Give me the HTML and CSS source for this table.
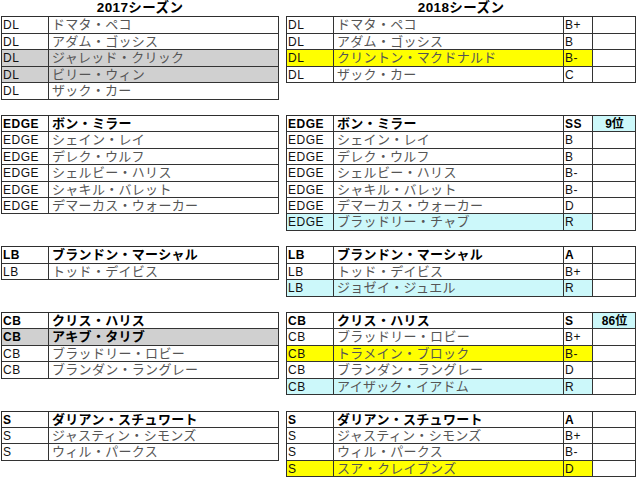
FILE: index.html
```html
<!DOCTYPE html>
<html lang="ja">
<head>
<meta charset="utf-8">
<link rel="stylesheet" href="styles.css">
</head>
<body>
<div class="page">
  <div class="head">
    <div class="t l">2017シーズン</div>
    <div class="t r">2018シーズン</div>
  </div>
  <div class="sheet">
    <div class="sec">
      <div class="tbl l">
        <div class="row"><div class="c">DL</div><div class="c n">ドマタ・ペコ</div></div>
        <div class="row"><div class="c">DL</div><div class="c n">アダム・ゴッシス</div></div>
        <div class="row gray"><div class="c">DL</div><div class="c n">ジャレッド・クリック</div></div>
        <div class="row gray"><div class="c">DL</div><div class="c n">ビリー・ウィン</div></div>
        <div class="row"><div class="c">DL</div><div class="c n">ザック・カー</div></div>
      </div>
      <div class="tbl r">
        <div class="row"><div class="c">DL</div><div class="c n">ドマタ・ペコ</div><div class="c">B+</div><div class="c rk"></div></div>
        <div class="row"><div class="c">DL</div><div class="c n">アダム・ゴッシス</div><div class="c">B</div><div class="c rk"></div></div>
        <div class="row yel"><div class="c">DL</div><div class="c n">クリントン・マクドナルド</div><div class="c">B-</div><div class="c rk"></div></div>
        <div class="row"><div class="c">DL</div><div class="c n">ザック・カー</div><div class="c">C</div><div class="c rk"></div></div>
      </div>
    </div>

    <div class="sec">
      <div class="tbl l">
        <div class="row b"><div class="c">EDGE</div><div class="c n">ボン・ミラー</div></div>
        <div class="row"><div class="c">EDGE</div><div class="c n">シェイン・レイ</div></div>
        <div class="row"><div class="c">EDGE</div><div class="c n">デレク・ウルフ</div></div>
        <div class="row"><div class="c">EDGE</div><div class="c n">シェルビー・ハリス</div></div>
        <div class="row"><div class="c">EDGE</div><div class="c n">シャキル・バレット</div></div>
        <div class="row"><div class="c">EDGE</div><div class="c n">デマーカス・ウォーカー</div></div>
      </div>
      <div class="tbl r">
        <div class="row b"><div class="c">EDGE</div><div class="c n">ボン・ミラー</div><div class="c">SS</div><div class="c rk hl">9位</div></div>
        <div class="row"><div class="c">EDGE</div><div class="c n">シェイン・レイ</div><div class="c">B</div><div class="c rk"></div></div>
        <div class="row"><div class="c">EDGE</div><div class="c n">デレク・ウルフ</div><div class="c">B</div><div class="c rk"></div></div>
        <div class="row"><div class="c">EDGE</div><div class="c n">シェルビー・ハリス</div><div class="c">B-</div><div class="c rk"></div></div>
        <div class="row"><div class="c">EDGE</div><div class="c n">シャキル・バレット</div><div class="c">B-</div><div class="c rk"></div></div>
        <div class="row"><div class="c">EDGE</div><div class="c n">デマーカス・ウォーカー</div><div class="c">D</div><div class="c rk"></div></div>
        <div class="row cy"><div class="c">EDGE</div><div class="c n">ブラッドリー・チャブ</div><div class="c">R</div><div class="c rk"></div></div>
      </div>
    </div>

    <div class="sec">
      <div class="tbl l">
        <div class="row b"><div class="c">LB</div><div class="c n">ブランドン・マーシャル</div></div>
        <div class="row"><div class="c">LB</div><div class="c n">トッド・デイビス</div></div>
      </div>
      <div class="tbl r">
        <div class="row b"><div class="c">LB</div><div class="c n">ブランドン・マーシャル</div><div class="c">A</div><div class="c rk"></div></div>
        <div class="row"><div class="c">LB</div><div class="c n">トッド・デイビス</div><div class="c">B+</div><div class="c rk"></div></div>
        <div class="row cy"><div class="c">LB</div><div class="c n">ジョゼイ・ジュエル</div><div class="c">R</div><div class="c rk"></div></div>
      </div>
    </div>

    <div class="sec">
      <div class="tbl l">
        <div class="row b"><div class="c">CB</div><div class="c n">クリス・ハリス</div></div>
        <div class="row b gray"><div class="c">CB</div><div class="c n">アキブ・タリブ</div></div>
        <div class="row"><div class="c">CB</div><div class="c n">ブラッドリー・ロビー</div></div>
        <div class="row"><div class="c">CB</div><div class="c n">ブランダン・ラングレー</div></div>
      </div>
      <div class="tbl r">
        <div class="row b"><div class="c">CB</div><div class="c n">クリス・ハリス</div><div class="c">S</div><div class="c rk hl">86位</div></div>
        <div class="row"><div class="c">CB</div><div class="c n">ブラッドリー・ロビー</div><div class="c">B+</div><div class="c rk"></div></div>
        <div class="row yel"><div class="c">CB</div><div class="c n">トラメイン・ブロック</div><div class="c">B-</div><div class="c rk"></div></div>
        <div class="row"><div class="c">CB</div><div class="c n">ブランダン・ラングレー</div><div class="c">D</div><div class="c rk"></div></div>
        <div class="row cy"><div class="c">CB</div><div class="c n">アイザック・イアドム</div><div class="c">R</div><div class="c rk"></div></div>
      </div>
    </div>

    <div class="sec">
      <div class="tbl l">
        <div class="row b"><div class="c">S</div><div class="c n">ダリアン・スチュワート</div></div>
        <div class="row"><div class="c">S</div><div class="c n">ジャスティン・シモンズ</div></div>
        <div class="row"><div class="c">S</div><div class="c n">ウィル・パークス</div></div>
      </div>
      <div class="tbl r">
        <div class="row b"><div class="c">S</div><div class="c n">ダリアン・スチュワート</div><div class="c">A</div><div class="c rk"></div></div>
        <div class="row"><div class="c">S</div><div class="c n">ジャスティン・シモンズ</div><div class="c">B+</div><div class="c rk"></div></div>
        <div class="row"><div class="c">S</div><div class="c n">ウィル・パークス</div><div class="c">B-</div><div class="c rk"></div></div>
        <div class="row yel"><div class="c">S</div><div class="c n">スア・クレイブンズ</div><div class="c">D</div><div class="c rk"></div></div>
      </div>
    </div>
  </div>
</div>
</body>
</html>
```

FILE: styles.css
```css
body {
  margin: 0;
  background: #ffffff;
  font-family: "Liberation Sans", Arial, "Noto Sans CJK JP", sans-serif;
  font-size: 12px;
  color: #000;
}

.page {
  display: flex;
  flex-direction: column;
  padding-left: 1px;
}

.head {
  display: flex;
  gap: 7px;
  height: 16.43px;
}

.head .t {
  font-weight: bold;
  text-align: center;
  font-size: 13.5px;
  line-height: 15px;
  letter-spacing: 0.4px;
  font-family: "Liberation Sans", "Noto Sans CJK JP", sans-serif;
}

.head .t.l { width: 278px; }
.head .t.r { width: 350px; }

.sheet {
  display: flex;
  flex-direction: column;
  gap: 15.43px;
}

.sec {
  display: flex;
  align-items: flex-start;
  gap: 7px;
}

.tbl {
  display: grid;
  grid-auto-rows: 16.43px;
  border-top: 1px solid #2e2e2e;
  border-left: 1px solid #2e2e2e;
}

.tbl.l { grid-template-columns: 47px 230px; }
.tbl.r { grid-template-columns: 47px 230px 29px 43px; }

.row { display: contents; }

.c {
  box-sizing: border-box;
  border-right: 1px solid #333;
  border-bottom: 1px solid #333;
  padding: 1px 0 0 1px;
  line-height: 14px;
  white-space: nowrap;
  letter-spacing: 0.5px;
  color: #111;
}

.n {
  font-family: "Liberation Sans", "Noto Sans CJK JP", sans-serif;
  font-size: 13px;
  color: #555;
  padding-left: 3px;
  letter-spacing: 0.3px;
}

.b > .c {
  font-weight: bold;
  color: #000;
}

.rk {
  text-align: center;
  font-weight: bold;
  letter-spacing: 0;
}

.gray > .c { background: #d0d0d0; }
.yel > .c:not(.rk) { background: #ffff00; }
.cy > .c:not(.rk) { background: #ccf8fa; }
.rk.hl { background: #ccf8fa; }
```
